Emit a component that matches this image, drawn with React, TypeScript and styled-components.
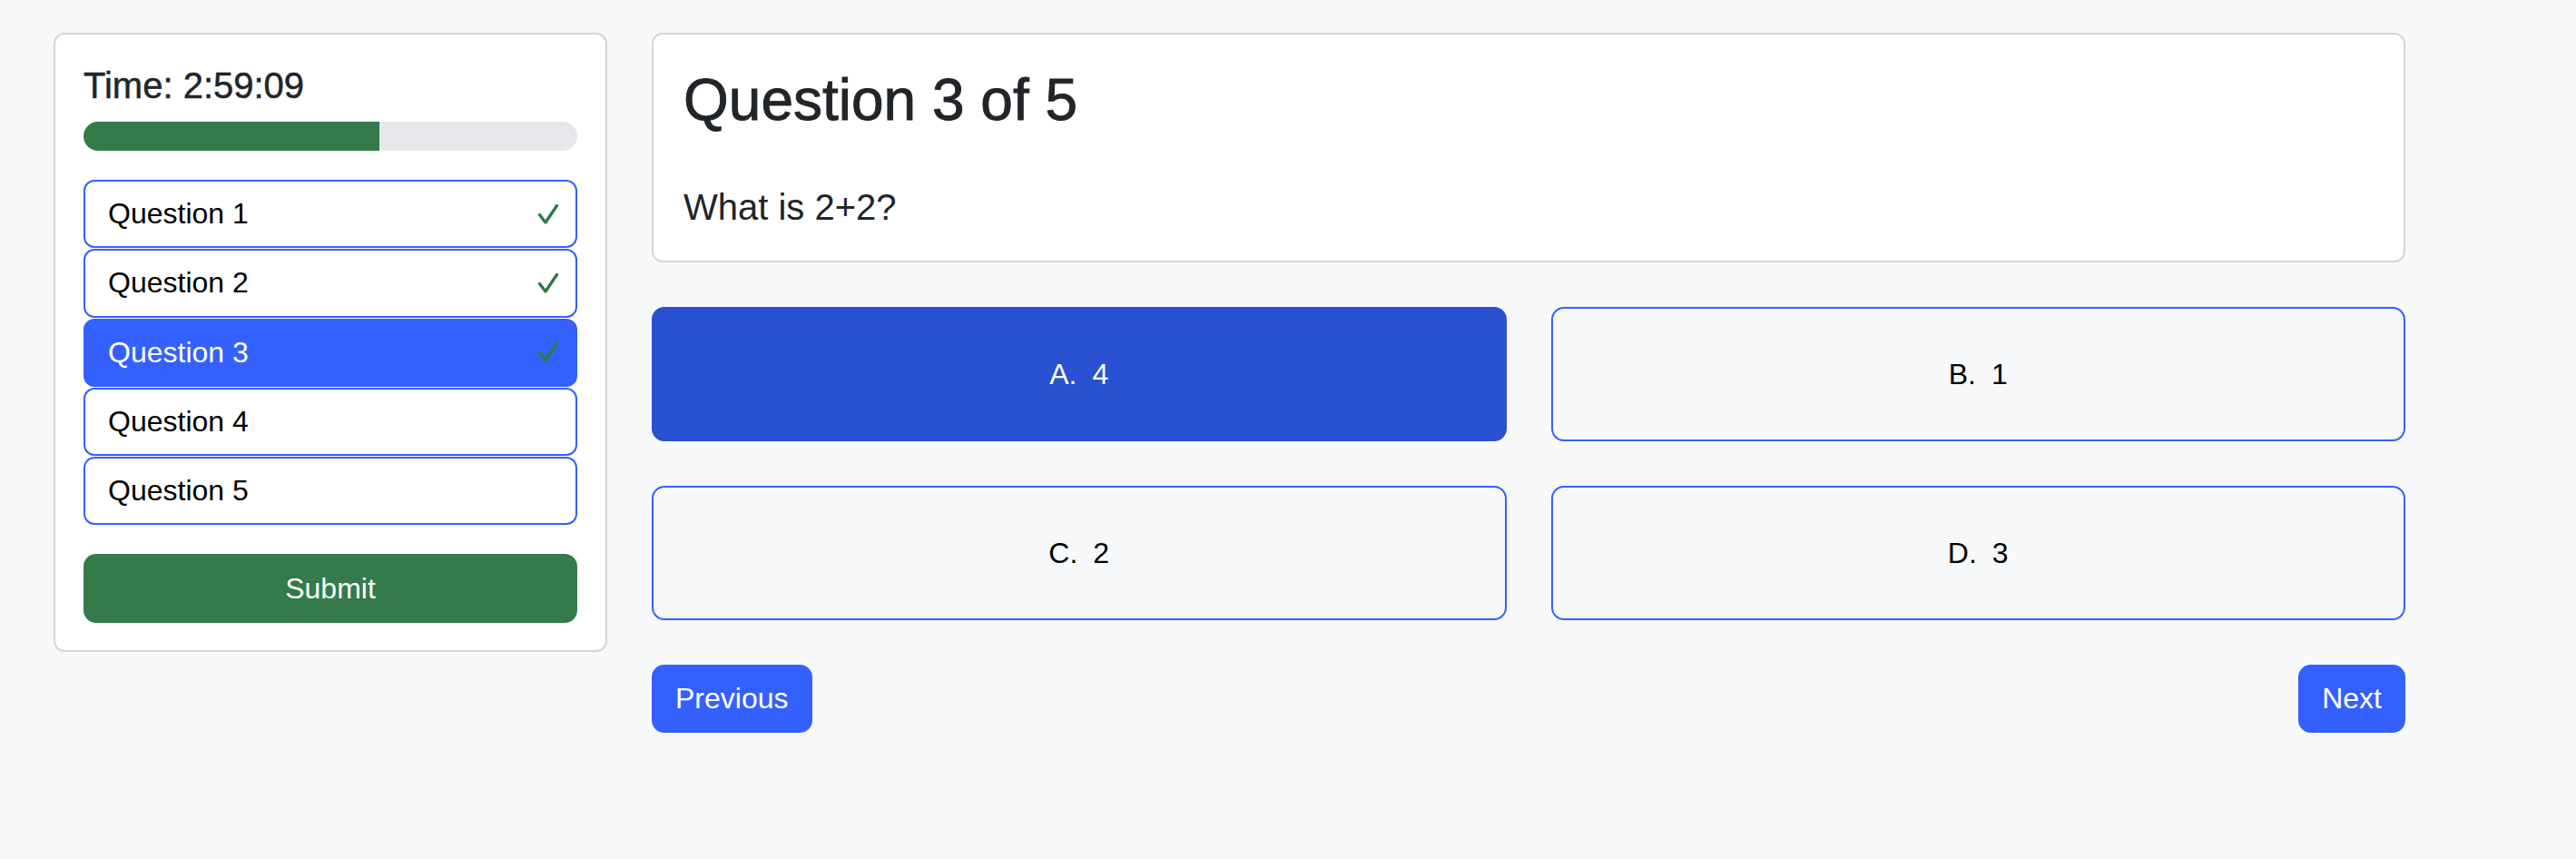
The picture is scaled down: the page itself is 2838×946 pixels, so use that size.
import React from "react";
import styled, { createGlobalStyle, css } from "styled-components";

const GlobalStyle = createGlobalStyle`
  html, body {
    margin: 0;
    padding: 0;
    background: #f7f8fa;
    font-family: "Liberation Sans", Arial, sans-serif;
  }
  * { box-sizing: border-box; }
`;

const BLUE = "#3461fd";
const BLUE_DARK = "#2951d0";
const GREEN = "#347a4a";

const Page = styled.div`
  display: flex;
  align-items: flex-start;
  gap: 49px;
  padding: 36px 0 0 59px;
  min-height: 946px;
`;

const Card = styled.div`
  background: #ffffff;
  border: 2px solid #d6d6d6;
  border-radius: 12px;
`;

const Sidebar = styled(Card)`
  width: 610px;
  padding: 32px 31px 30px;
  display: flex;
  flex-direction: column;
`;

const Timer = styled.div`
  font-size: 40px;
  line-height: 48px;
  color: #212529;
  margin-bottom: 16px;
  -webkit-text-stroke: 0.5px #212529;
`;

const Track = styled.div`
  height: 32px;
  border-radius: 16px;
  background: #e5e7eb;
  overflow: hidden;
  margin-bottom: 32px;
`;

const Fill = styled.div`
  height: 100%;
  background: ${GREEN};
`;

const QuestionList = styled.div`
  display: flex;
  flex-direction: column;
  gap: 1px;
  margin-bottom: 32px;
`;

const QuestionItem = styled.button<{ $active?: boolean }>`
  display: flex;
  align-items: center;
  justify-content: space-between;
  height: 75.25px;
  padding: 0 19px 0 25px;
  border: 2px solid ${BLUE};
  border-radius: 12px;
  background: #ffffff;
  color: #000000;
  font-family: inherit;
  font-size: 32px;
  text-align: left;
  cursor: pointer;
  ${(p) =>
    p.$active &&
    css`
      background: ${BLUE};
      color: #ffffff;
    `}
`;

const Check = styled.svg`
  width: 22px;
  height: 22px;
  flex: none;
`;

const SubmitButton = styled.button`
  height: 76px;
  border: none;
  border-radius: 14px;
  background: ${GREEN};
  color: #ffffff;
  font-family: inherit;
  font-size: 32px;
  cursor: pointer;
`;

const Main = styled.div`
  width: 1932px;
  display: flex;
  flex-direction: column;
  gap: 49px;
`;

const QuestionCard = styled(Card)`
  padding: 34px 33px 29px;
`;

const Heading = styled.h2`
  margin: 0 0 49px;
  font-size: 64px;
  line-height: 77px;
  font-weight: 400;
  color: #212529;
  -webkit-text-stroke: 0.9px #212529;
`;

const Prompt = styled.p`
  margin: 0;
  font-size: 40px;
  line-height: 60px;
  color: #212529;
`;

const Options = styled.div`
  display: grid;
  grid-template-columns: 1fr 1fr;
  gap: 49px;
`;

const Option = styled.button<{ $selected?: boolean }>`
  height: 148px;
  border: 2px solid ${BLUE};
  border-radius: 14px;
  background: transparent;
  color: #000000;
  font-family: inherit;
  font-size: 32px;
  cursor: pointer;
  ${(p) =>
    p.$selected &&
    css`
      background: ${BLUE_DARK};
      border-color: ${BLUE_DARK};
      color: #ffffff;
    `}
`;

const OptionLetter = styled.span`
  margin-right: 17px;
`;

const Nav = styled.div`
  display: flex;
  justify-content: space-between;
`;

const NavButton = styled.button`
  height: 75px;
  padding: 0 26px;
  border: none;
  border-radius: 14px;
  background: ${BLUE};
  color: #ffffff;
  font-family: inherit;
  font-size: 32px;
  cursor: pointer;
`;

const CheckIcon = () => (
  <Check viewBox="0 0 22 22" fill="none">
    <polyline
      points="1.5,11.5 8,20 20.5,1.5"
      stroke="#2e7a47"
      strokeWidth="3.4"
      strokeLinecap="round"
      strokeLinejoin="round"
    />
  </Check>
);

const questions = [
  { n: 1, answered: true },
  { n: 2, answered: true },
  { n: 3, answered: true },
  { n: 4, answered: false },
  { n: 5, answered: false },
];

const options = [
  { letter: "A", value: "4", selected: true },
  { letter: "B", value: "1" },
  { letter: "C", value: "2" },
  { letter: "D", value: "3" },
];

export default function App() {
  const current = 3;
  const answered = questions.filter((q) => q.answered).length;
  const progress = (answered / questions.length) * 100;
  return (
    <>
      <GlobalStyle />
      <Page>
        <Sidebar>
          <Timer>Time: 2:59:09</Timer>
          <Track>
            <Fill style={{ width: `${progress}%` }} />
          </Track>
          <QuestionList>
            {questions.map((q) => (
              <QuestionItem key={q.n} $active={q.n === current}>
                <span>Question {q.n}</span>
                {q.answered && <CheckIcon />}
              </QuestionItem>
            ))}
          </QuestionList>
          <SubmitButton>Submit</SubmitButton>
        </Sidebar>
        <Main>
          <QuestionCard>
            <Heading>Question 3 of 5</Heading>
            <Prompt>What is 2+2?</Prompt>
          </QuestionCard>
          <Options>
            {options.map((o) => (
              <Option key={o.letter} $selected={o.selected}>
                <OptionLetter>{o.letter}.</OptionLetter>
                {o.value}
              </Option>
            ))}
          </Options>
          <Nav>
            <NavButton>Previous</NavButton>
            <NavButton>Next</NavButton>
          </Nav>
        </Main>
      </Page>
    </>
  );
}
